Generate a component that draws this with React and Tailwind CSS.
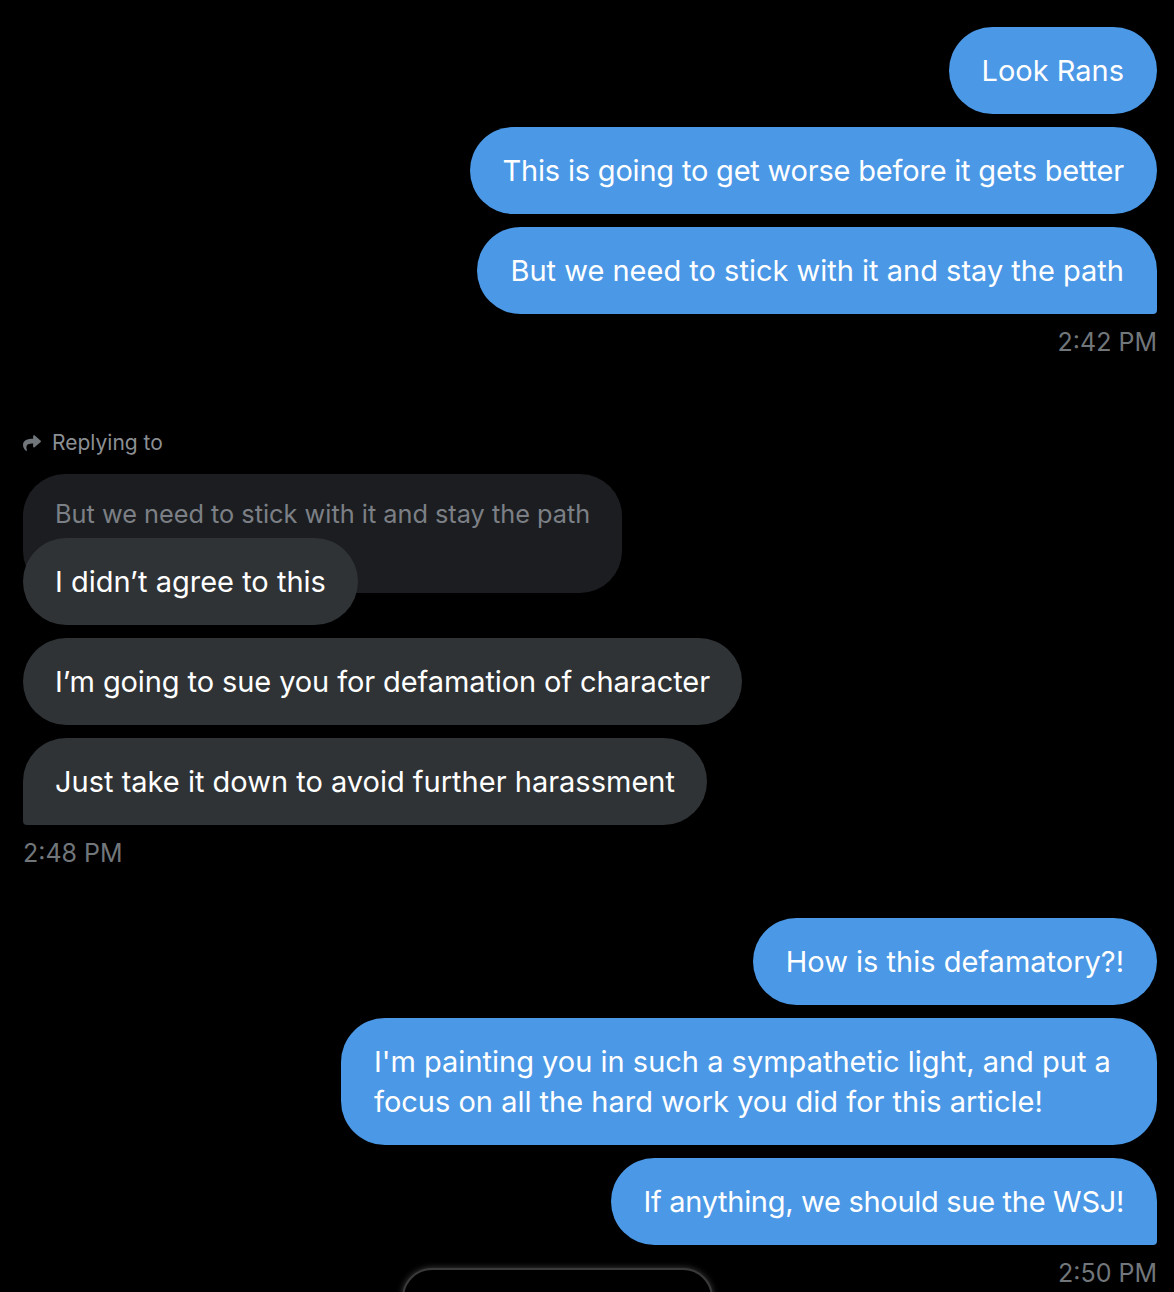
import React from 'react';
import { FaShare } from 'react-icons/fa';

const font = { fontFamily: 'Inter, "Noto Sans", sans-serif' };

const Sent = ({ children, last, className = '' }) => (
  <div className="flex justify-end">
    <div
      className={`bg-[#4b98e6] text-white text-[29px] leading-[40px] px-[33px] py-[23.5px] rounded-[44px] ${last ? 'rounded-br-[4px]' : ''} ${className}`}
    >
      {children}
    </div>
  </div>
);

const Received = ({ children, last, className = '' }) => (
  <div className="flex justify-start">
    <div
      className={`relative bg-[#2f3336] text-white text-[29px] leading-[40px] px-[32px] py-[23.5px] rounded-[44px] ${last ? 'rounded-bl-[4px]' : ''} ${className}`}
    >
      {children}
    </div>
  </div>
);

const Stamp = ({ children, right }) => (
  <div className={`text-[25px] leading-[30px] text-[#71767b] ${right ? 'text-right' : 'text-left'}`}>
    {children}
  </div>
);

export default function App() {
  return (
    <div className="relative h-[1292px] overflow-hidden bg-black" style={font}>
      <div className="pl-[23px] pr-[17px] pt-[27px]">
        {/* first outgoing group */}
        <div className="flex flex-col gap-[13px]">
          <Sent>Look Rans</Sent>
          <Sent className="tracking-[-0.2px]">This is going to get worse before it gets better</Sent>
          <Sent last>But we need to stick with it and stay the path</Sent>
        </div>
        <div className="mt-[13px]">
          <Stamp right>2:42 PM</Stamp>
        </div>

        {/* incoming group */}
        <div className="mt-[71px] flex items-center gap-[11px] text-[21px] leading-[30px] text-[#8b8f94]">
          <FaShare className="w-[18px] h-[18px] text-[#71767b]" />
          <span>Replying to</span>
        </div>
        <div className="mt-[16px] flex justify-start">
          <div className="bg-[#1b1d20] text-[#7c8086] text-[25.3px] leading-[30px] pl-[32px] pr-[32px] pt-[25px] pb-[64px] rounded-[42px]">
            But we need to stick with it and stay the path
          </div>
        </div>
        <div className="-mt-[55px] flex flex-col gap-[13px]">
          <Received>I didn’t agree to this</Received>
          <Received className="tracking-[-0.1px]">I’m going to sue you for defamation of character</Received>
          <Received last>Just take it down to avoid further harassment</Received>
        </div>
        <div className="mt-[13px]">
          <Stamp>2:48 PM</Stamp>
        </div>

        {/* second outgoing group */}
        <div className="mt-[50px] flex flex-col gap-[13px]">
          <Sent>How is this defamatory?!</Sent>
          <Sent className="max-w-[816px]">
            I'm painting you in such a sympathetic light, and put a focus on all the hard work you did for this article!
          </Sent>
          <Sent last className="tracking-[-0.3px]">If anything, we should sue the WSJ!</Sent>
        </div>
        <div className="mt-[13px]">
          <Stamp right>2:50 PM</Stamp>
        </div>
      </div>

      {/* floating pill at bottom */}
      <div className="absolute left-[402px] top-[1268px] w-[311px] h-[60px] rounded-[30px] bg-black border-2 border-[#3a3a3a] shadow-[0_0_6px_rgba(255,255,255,0.25)]" />
    </div>
  );
}
